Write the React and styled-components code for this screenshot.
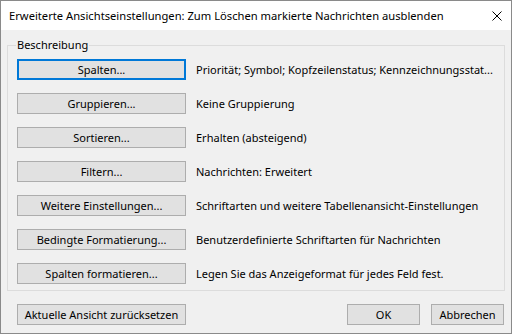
import React from "react";
import styled, { createGlobalStyle } from "styled-components";

const Global = createGlobalStyle`
  html, body { margin: 0; padding: 0; background: #f0f0f0; }
  body { font-family: "Noto Sans", "Segoe UI", sans-serif; font-size: 11px; color: #000; }
  * { box-sizing: border-box; }
`;

const Window = styled.div`
  width: 512px;
  height: 334px;
  border: 1px solid #8a8a8a;
  background: #f0f0f0;
  display: flex;
  flex-direction: column;
`;

const TitleBar = styled.div`
  height: 29px;
  background: #fff;
  display: flex;
  align-items: center;
  justify-content: space-between;
  padding: 0 9px 0 8px;
  flex-shrink: 0;
`;

const Title = styled.div`
  font-size: 11.2px;
  line-height: 16px;
  color: #000;
  white-space: nowrap;
`;

const Close = styled.svg`
  width: 10px;
  height: 10px;
  display: block;
`;

const Body = styled.div`
  flex: 1;
  display: flex;
  flex-direction: column;
  padding: 15px 6px 0 6px;
`;

const Group = styled.div`
  position: relative;
  height: 246px;
  border: 1px solid #dcdcdc;
  padding: 13px 0 0 9px;
  display: flex;
  flex-direction: column;
  gap: 13px;
`;

const Legend = styled.span`
  position: absolute;
  left: 8px;
  top: -9px;
  padding: 0 1px;
  background: #f0f0f0;
  line-height: 16px;
  white-space: nowrap;
`;

const Row = styled.div`
  display: flex;
  align-items: center;
  gap: 10px;
`;

const Button = styled.button`
  width: ${(p) => p.$w || 169}px;
  height: 21px;
  padding: 0;
  margin: 0;
  background: #e1e1e1;
  border: ${(p) => (p.$focus ? "2px solid #0078d7" : "1px solid #adadad")};
  font-family: inherit;
  font-size: 11px;
  color: #000;
  line-height: 16px;
  text-align: center;
  flex-shrink: 0;
  white-space: nowrap;
`;

const Desc = styled.span`
  line-height: 16px;
  white-space: nowrap;
`;

const Footer = styled.div`
  display: flex;
  justify-content: space-between;
  align-items: center;
  padding: 13px 1px 0 10px;
`;

const FooterRight = styled.div`
  display: flex;
  gap: 11px;
`;

const rows = [
  ["Spalten...", "Priorität; Symbol; Kopfzeilenstatus; Kennzeichnungsstat...", true],
  ["Gruppieren...", "Keine Gruppierung"],
  ["Sortieren...", "Erhalten (absteigend)"],
  ["Filtern...", "Nachrichten: Erweitert"],
  ["Weitere Einstellungen...", "Schriftarten und weitere Tabellenansicht-Einstellungen"],
  ["Bedingte Formatierung...", "Benutzerdefinierte Schriftarten für Nachrichten"],
  ["Spalten formatieren...", "Legen Sie das Anzeigeformat für jedes Feld fest."],
];

export default function App() {
  return (
    <>
      <Global />
      <Window>
        <TitleBar>
          <Title>Erweiterte Ansichtseinstellungen: Zum Löschen markierte Nachrichten ausblenden</Title>
          <Close viewBox="0 0 10 10">
            <path d="M0.5 0.5 L9.5 9.5 M9.5 0.5 L0.5 9.5" stroke="#000" strokeWidth="1" fill="none" />
          </Close>
        </TitleBar>
        <Body>
          <Group>
            <Legend>Beschreibung</Legend>
            {rows.map(([b, d, f]) => (
              <Row key={b}>
                <Button $focus={f}>{b}</Button>
                <Desc>{d}</Desc>
              </Row>
            ))}
          </Group>
          <Footer>
            <Button>Aktuelle Ansicht zurücksetzen</Button>
            <FooterRight>
              <Button $w={73}>OK</Button>
              <Button $w={73}>Abbrechen</Button>
            </FooterRight>
          </Footer>
        </Body>
      </Window>
    </>
  );
}
